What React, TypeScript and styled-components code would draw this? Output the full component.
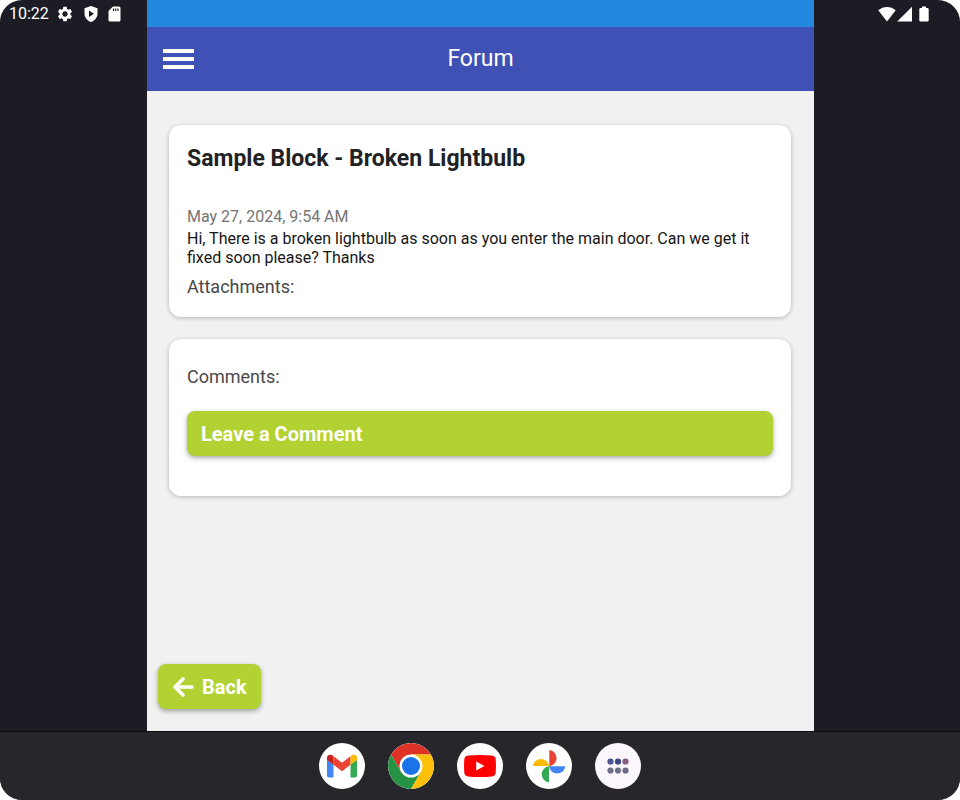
import React from "react";
import styled, { createGlobalStyle } from "styled-components";
import { MdSettings } from "react-icons/md";

const GlobalStyle = createGlobalStyle`
  *, *::before, *::after { box-sizing: border-box; }
  html, body { margin: 0; background: #ffffff; }
  body, button { font-family: Roboto, "Liberation Sans", sans-serif; }
  h1, h2, p { margin: 0; }
`;

const Device = styled.div`
  display: flex;
  flex-direction: column;
  min-height: 100vh;
  border-radius: 22px;
  overflow: hidden;
  background: #1c1c24;
`;

const Stage = styled.div`
  flex: 1;
  display: grid;
  grid-template-columns: 147px minmax(0, 1fr) 146px;
  border-bottom: 1px solid #0b0b0e;
`;

const StatusGroup = styled.div<{ $end?: boolean }>`
  display: flex;
  align-items: center;
  align-self: start;
  justify-content: ${(p) => (p.$end ? "flex-end" : "flex-start")};
  gap: 7px;
  height: 28px;
  padding: ${(p) => (p.$end ? "0 31px 0 0" : "0 0 0 9px")};
  color: #ffffff;
  svg { display: block; flex: none; }
`;

const Clock = styled.time`
  font-size: 16px;
  line-height: 28px;
`;

const StatusIcons = styled.div<{ $gap: number }>`
  display: flex;
  align-items: center;
  gap: ${(p) => p.$gap}px;
`;

const Screen = styled.div`
  display: flex;
  flex-direction: column;
  background: #f1f1f1;
`;

const TopStrip = styled.div`
  height: 27px;
  background: #2188dd;
`;

const AppBar = styled.header`
  display: grid;
  grid-template-columns: 48px 1fr 48px;
  align-items: center;
  height: 64px;
  padding: 0 8px;
  background: #3f51b5;
  color: #ffffff;
`;

const MenuButton = styled.button`
  display: flex;
  flex-direction: column;
  gap: 4px;
  padding: 8px;
  border: 0;
  background: none;
  cursor: pointer;
`;

const MenuBar = styled.span`
  width: 31px;
  height: 4px;
  background: #ffffff;
`;

const AppTitle = styled.h1`
  font-size: 23px;
  font-weight: 400;
  line-height: 34px;
  text-align: center;
`;

const Content = styled.main`
  flex: 1;
  display: flex;
  flex-direction: column;
  gap: 22px;
  padding: 34px 23px 22px 22px;
`;

const Card = styled.section`
  padding: 18px;
  border-radius: 12px;
  background: #ffffff;
  box-shadow: 0 1px 4px rgba(0, 0, 0, 0.26);
`;

const PostTitle = styled.h2`
  font-size: 23px;
  font-weight: 700;
  line-height: 32px;
  margin-bottom: 32px;
  color: #222224;
`;

const PostDate = styled.p`
  font-size: 16px;
  line-height: 20px;
  margin-bottom: 2px;
  color: #757575;
`;

const PostBody = styled.p`
  font-size: 16px;
  line-height: 19px;
  color: #161616;
`;

const SectionLabel = styled.p`
  font-size: 18px;
  line-height: 24px;
  padding-top: 8px;
  color: #484848;
`;

const ActionButton = styled.button<{ $block?: boolean }>`
  display: flex;
  align-items: center;
  gap: 8px;
  width: ${(p) => (p.$block ? "100%" : "auto")};
  height: 45px;
  margin: ${(p) => (p.$block ? "22px 0" : "0")};
  padding: 0 14px;
  border: 0;
  border-radius: 8px;
  background: #b2d233;
  color: #ffffff;
  font-size: 20px;
  font-weight: 700;
  box-shadow: 0 2px 5px rgba(0, 0, 0, 0.35);
  cursor: pointer;
`;

const Footer = styled.footer`
  display: flex;
  padding: 0 11px 22px;
`;

const Dock = styled.nav`
  display: flex;
  justify-content: center;
  align-items: center;
  gap: 23px;
  height: 68px;
  background: #26262b;
`;

const DockButton = styled.button<{ $tint?: string }>`
  width: 46px;
  height: 46px;
  padding: 0;
  border: 0;
  border-radius: 50%;
  overflow: hidden;
  background: ${(p) => p.$tint ?? "#ffffff"};
  cursor: pointer;
  svg { display: block; }
`;

const ShieldPlay = () => (
  <svg width="14" height="18" viewBox="0 0 14 18" aria-hidden="true">
    <path fill="currentColor" fillRule="evenodd" d="M7 1 13.5 3.3V8.5C13.5 12.6 10.8 15.6 7 17 3.2 15.6.5 12.6.5 8.500V3.300ZM5 5.600V12L10 8.800Z" />
  </svg>
);

const SdCard = () => (
  <svg width="13" height="16" viewBox="0 0 13 16" aria-hidden="true">
    <path fill="currentColor" d="M5 .5H11Q12.500.5 12.500 2V14Q12.500 15.500 11 15.500H2Q.5 15.500.5 14V5Z" />
    <path stroke="#1c1c24" strokeWidth="1.200" d="M5.500 2.500V5M7.700 2.500V5M9.900 2.500V5" />
  </svg>
);

const Wifi = () => (
  <svg width="18" height="16" viewBox="0 0 18 16" aria-hidden="true">
    <path fill="currentColor" d="M9 15.500.3 4.300C5.200-.2 12.800-.2 17.700 4.300Z" />
  </svg>
);

const Signal = () => (
  <svg width="15" height="16" viewBox="0 0 15 16" aria-hidden="true">
    <path fill="currentColor" d="M15 .7V15.500H.2Z" />
  </svg>
);

const Battery = () => (
  <svg width="10" height="16" viewBox="0 0 10 16" aria-hidden="true">
    <path fill="currentColor" d="M3 .5H7V2H8.500Q9.700 2 9.700 3.200V14.300Q9.700 15.500 8.500 15.500H1.500Q.3 15.500.3 14.300V3.200Q.3 2 1.500 2H3Z" />
  </svg>
);

const BackArrow = () => (
  <svg width="22" height="20" viewBox="0 0 22 20" fill="none" stroke="currentColor" strokeWidth="3.500" strokeLinecap="round" strokeLinejoin="round" aria-hidden="true">
    <path d="M11 2 3 10 11 18M4 10H20" />
  </svg>
);

const Gmail = () => (
  <svg width="46" height="46" viewBox="0 0 46 46" aria-hidden="true">
    <path fill="#4285f4" d="M8 17 14.500 21.500V34.500H10Q8 34.500 8 32.500Z" />
    <path fill="#34a853" d="M38 17 31.500 21.500V34.500H36Q38 34.500 38 32.500Z" />
    <path fill="#ea4335" d="M14.500 13.200 23 19.700 31.500 13.200V21.700L23 28.300 14.500 21.700Z" />
    <path fill="#c5221f" d="M8 15C8 11.500 11.700 10.900 14.500 13.200V21.700L8 17Z" />
    <path fill="#fbbc04" d="M38 15C38 11.500 34.300 10.900 31.500 13.200V21.700L38 17Z" />
  </svg>
);

const Chrome = () => (
  <svg width="46" height="46" viewBox="0 0 46 46" aria-hidden="true">
    <path fill="#de3226" d="M23 11.500H42.900A23 23 0 0 0 3.100 11.500L13 28.700Z" />
    <path fill="#259343" d="M3.100 11.500A23 23 0 0 0 23 46L33 28.700 23 23 13 28.700Z" />
    <path fill="#fdc10a" d="M42.900 11.500A23 23 0 0 1 23 46L33 28.700 23 11.500Z" />
    <circle cx="23" cy="23" r="11.500" fill="#ffffff" />
    <circle cx="23" cy="23" r="9" fill="#1a73e8" />
  </svg>
);

const YouTube = () => (
  <svg width="46" height="46" viewBox="0 0 46 46" aria-hidden="true">
    <path fill="#ff0000" d="M11 12.500Q23 11.500 35 12.500 38.500 12.900 38.700 16.500 39.200 23 38.700 29.500 38.500 33.100 35 33.500 23 34.500 11 33.500 7.500 33.100 7.300 29.500 6.800 23 7.300 16.500 7.500 12.900 11 12.500Z" />
    <path fill="#ffffff" d="M19.200 18.500 27.500 23 19.200 27.500Z" />
  </svg>
);

const Photos = () => (
  <svg width="46" height="46" viewBox="0 0 46 46" aria-hidden="true">
    <path fill="#ea4335" d="M23.300 7A8.200 8.200 0 0 1 23.300 23.300Z" />
    <path fill="#4285f4" d="M39.300 23.300A8.200 8.200 0 0 1 23 23.300Z" />
    <path fill="#34a853" d="M23 39.500A8.200 8.200 0 0 1 23 23.200Z" />
    <path fill="#fbbc04" d="M6.800 23A8.200 8.200 0 0 1 23 23Z" />
  </svg>
);

const APP_DOTS = [
  { x: 15.5, y: 18.5, fill: "#4a5493" },
  { x: 23, y: 18.5, fill: "#3b4685" },
  { x: 30.5, y: 18.5, fill: "#8a5d83" },
  { x: 15.5, y: 27.5, fill: "#6a7088" },
  { x: 23, y: 27.5, fill: "#6a7088" },
  { x: 30.5, y: 27.5, fill: "#6a6b8b" },
];

const AllApps = () => (
  <svg width="46" height="46" viewBox="0 0 46 46" aria-hidden="true">
    {APP_DOTS.map((d) => (
      <circle key={`${d.x}-${d.y}`} cx={d.x} cy={d.y} r="3.1" fill={d.fill} />
    ))}
  </svg>
);

export default function App() {
  return (
    <>
      <GlobalStyle />
      <Device>
        <Stage>
          <StatusGroup>
            <Clock>10:22</Clock>
            <StatusIcons $gap={10}>
              <MdSettings size={18} />
              <ShieldPlay />
              <SdCard />
            </StatusIcons>
          </StatusGroup>
          <Screen>
            <TopStrip />
            <AppBar>
              <MenuButton type="button" aria-label="Menu">
                <MenuBar />
                <MenuBar />
                <MenuBar />
              </MenuButton>
              <AppTitle>Forum</AppTitle>
            </AppBar>
            <Content>
              <Card>
                <PostTitle>Sample Block - Broken Lightbulb</PostTitle>
                <PostDate>May 27, 2024, 9:54 AM</PostDate>
                <PostBody>
                  Hi, There is a broken lightbulb as soon as you enter the main door. Can we get it
                  fixed soon please? Thanks
                </PostBody>
                <SectionLabel>Attachments:</SectionLabel>
              </Card>
              <Card>
                <SectionLabel>Comments:</SectionLabel>
                <ActionButton type="button" $block>
                  Leave a Comment
                </ActionButton>
              </Card>
            </Content>
            <Footer>
              <ActionButton type="button">
                <BackArrow />
                Back
              </ActionButton>
            </Footer>
          </Screen>
          <StatusGroup $end>
            <StatusIcons $gap={1}>
              <Wifi />
              <Signal />
            </StatusIcons>
            <Battery />
          </StatusGroup>
        </Stage>
        <Dock aria-label="Dock">
          <DockButton type="button" aria-label="Gmail"><Gmail /></DockButton>
          <DockButton type="button" aria-label="Chrome"><Chrome /></DockButton>
          <DockButton type="button" aria-label="YouTube"><YouTube /></DockButton>
          <DockButton type="button" aria-label="Photos"><Photos /></DockButton>
          <DockButton type="button" aria-label="All apps" $tint="#fcf7ff"><AllApps /></DockButton>
        </Dock>
      </Device>
    </>
  );
}
